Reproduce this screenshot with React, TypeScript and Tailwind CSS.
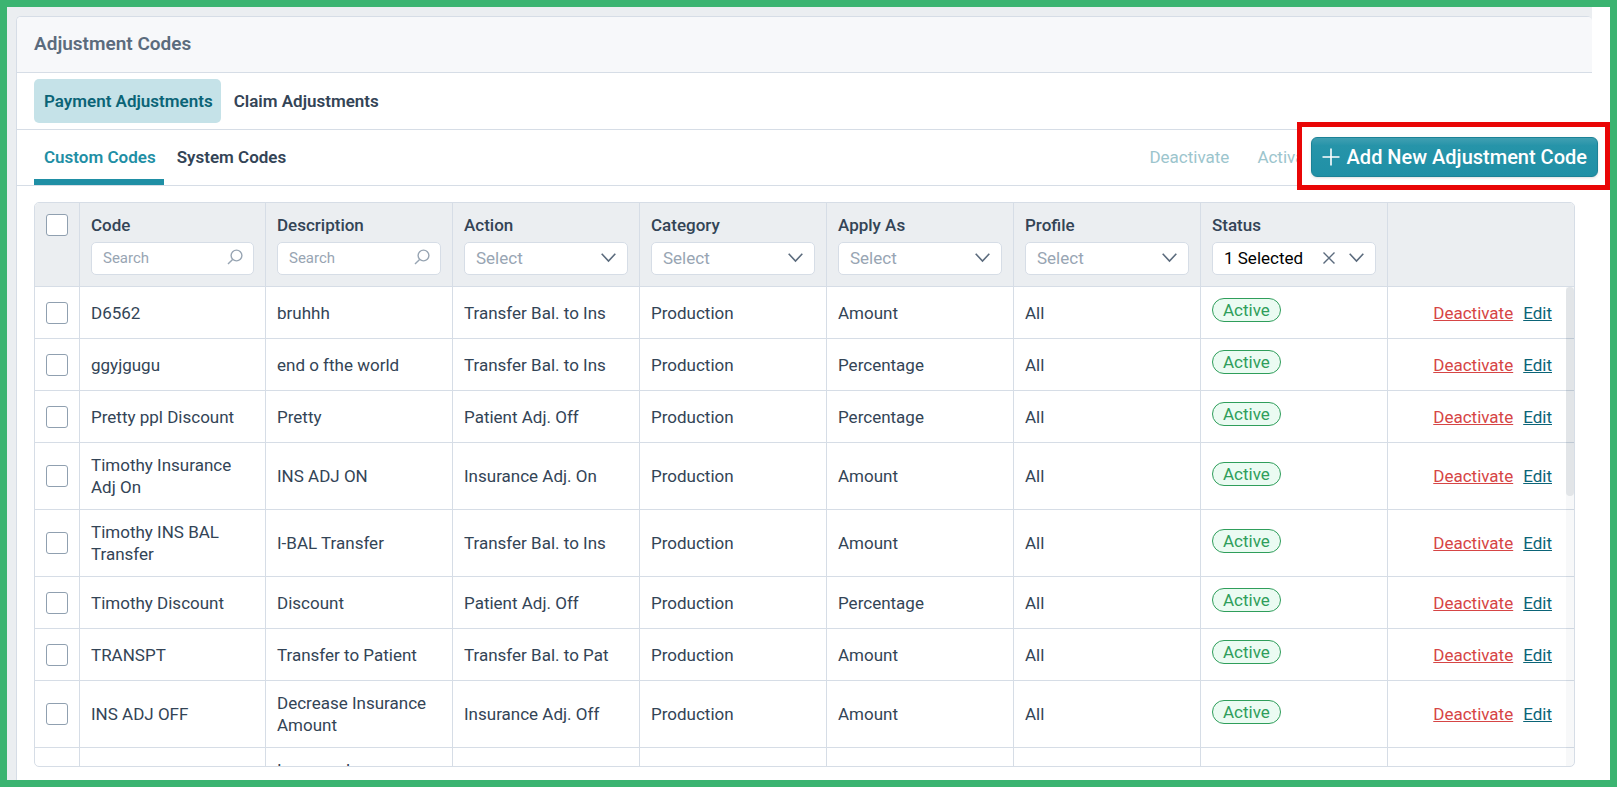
import { useState } from "react";

type Row = {
  code: string;
  description: string;
  action: string;
  category: string;
  applyAs: string;
  profile: string;
};

const rows: Row[] = [
  { code: "D6562", description: "bruhhh", action: "Transfer Bal. to Ins", category: "Production", applyAs: "Amount", profile: "All" },
  { code: "ggyjgugu", description: "end o fthe world", action: "Transfer Bal. to Ins", category: "Production", applyAs: "Percentage", profile: "All" },
  { code: "Pretty ppl Discount", description: "Pretty", action: "Patient Adj. Off", category: "Production", applyAs: "Percentage", profile: "All" },
  { code: "Timothy Insurance Adj On", description: "INS ADJ ON", action: "Insurance Adj. On", category: "Production", applyAs: "Amount", profile: "All" },
  { code: "Timothy INS BAL Transfer", description: "I-BAL Transfer", action: "Transfer Bal. to Ins", category: "Production", applyAs: "Amount", profile: "All" },
  { code: "Timothy Discount", description: "Discount", action: "Patient Adj. Off", category: "Production", applyAs: "Percentage", profile: "All" },
  { code: "TRANSPT", description: "Transfer to Patient", action: "Transfer Bal. to Pat", category: "Production", applyAs: "Amount", profile: "All" },
  { code: "INS ADJ OFF", description: "Decrease Insurance Amount", action: "Insurance Adj. Off", category: "Production", applyAs: "Amount", profile: "All" },
];

// The next row only peeks above the lower edge of the scroll area.
const nextRow = { code: "", description: "Increase Insurance Amount" };

const checkboxClass =
  "block size-[22px] appearance-none rounded-[3px] border border-[#90a0b0] bg-white checked:bg-[#1f8fa5]";
const headClass = "border-r border-b border-[#d6dde6] p-[11px] text-left align-top font-medium";
const cellClass = "border-r border-b border-[#d6dde6] px-[11px] py-[11px] align-middle";
const fieldClass =
  "h-[33px] w-full appearance-none rounded-[5px] border border-[#d6dde6] bg-white pb-[2px] pl-[11px] font-normal outline-none";

function SearchIcon() {
  return (
    <svg className="pointer-events-none absolute top-[7px] right-[11px]" width="16" height="16" viewBox="0 0 16 16" fill="none" stroke="#98a5b3" strokeWidth="1.4" aria-hidden="true">
      <circle cx="9.5" cy="6.5" r="5.4" />
      <path d="M5.6 10.4 L1 15" />
    </svg>
  );
}

function ChevronIcon() {
  return (
    <svg className="pointer-events-none absolute top-[11px] right-[12px]" width="15" height="10" viewBox="0 0 15 10" fill="none" stroke="#5b6b7d" strokeWidth="1.6" aria-hidden="true">
      <path d="M0.7 0.8 L7.5 8 L14.3 0.8" />
    </svg>
  );
}

function SearchHead({ label }: { label: string }) {
  return (
    <th scope="col" className={headClass}>
      <label className="block">
        {label}
        <span className="relative mt-[6px] block">
          <input type="text" placeholder="Search" className={`${fieldClass} pr-8 text-[15px] placeholder:text-[#98a5b3]`} />
          <SearchIcon />
        </span>
      </label>
    </th>
  );
}

function SelectHead({ label, options }: { label: string; options: string[] }) {
  return (
    <th scope="col" className={headClass}>
      <label className="block">
        {label}
        <span className="relative mt-[6px] block">
          <select className={`${fieldClass} text-[#98a5b3]`} defaultValue="">
            <option value="">Select</option>
            {options.map((o) => (
              <option key={o}>{o}</option>
            ))}
          </select>
          <ChevronIcon />
        </span>
      </label>
    </th>
  );
}

function StatusHead() {
  const [value, setValue] = useState("Active");
  return (
    <th scope="col" className={headClass}>
      <label htmlFor="status" className="block">Status</label>
      <span className="relative mt-[6px] block">
        <select id="status" className={`${fieldClass} text-black`} value={value} onChange={(e) => setValue(e.target.value)}>
          <option value="">Select</option>
          <option value="Active">1 Selected</option>
        </select>
        <button type="button" aria-label="Clear status" className="absolute top-[10px] right-[41px]" onClick={() => setValue("")}>
          <svg className="block" width="12" height="12" viewBox="0 0 12 12" stroke="#5b6b7d" strokeWidth="1.4" aria-hidden="true">
            <path d="M0.5 0.5 L11.5 11.5 M11.5 0.5 L0.5 11.5" />
          </svg>
        </button>
        <ChevronIcon />
      </span>
    </th>
  );
}

function CodeRow({ row }: { row: Row }) {
  return (
    <tr className="h-[52px]">
      <td className={cellClass}>
        <input type="checkbox" aria-label={`Select ${row.code}`} className={checkboxClass} />
      </td>
      <td className={cellClass}>{row.code}</td>
      <td className={cellClass}>{row.description}</td>
      <td className={cellClass}>{row.action}</td>
      <td className={cellClass}>{row.category}</td>
      <td className={cellClass}>{row.applyAs}</td>
      <td className={cellClass}>{row.profile}</td>
      <td className="border-r border-b border-[#d6dde6] px-[11px] pt-[10px] pb-[15px] align-middle">
        <span className="flex h-6 w-fit items-center rounded-full border border-[#2f9e5b] bg-[#ebfbf2] px-[10px] text-[#2f9e5b]">Active</span>
      </td>
      <td className="border-b border-[#d6dde6] pr-[22px] align-middle">
        <div className="flex justify-end gap-[10px]">
          <a href="#deactivate" className="text-[#d64545] underline">Deactivate</a>
          <a href="#edit" className="text-[#0b6477] underline">Edit</a>
        </div>
      </td>
    </tr>
  );
}

export default function App() {
  return (
    <div className="relative flex h-screen flex-col border-[7px] border-[#3bb471] bg-white font-['Roboto',sans-serif] text-[17px] leading-[22px] text-[#334456]">
      <div className="mr-[18px] flex min-h-0 flex-1 flex-col bg-[#ebeef1] pt-[9px] pl-[9px]">
        <main className="flex min-h-0 flex-1 flex-col rounded-t-[5px] border-t border-l border-[#d6dde6] bg-white">
          <header className="flex h-14 items-center rounded-t-[4px] border-b border-[#d6dde6] bg-[#f7f8fa] px-[17px] pb-[2px]">
            <h1 className="text-[19px] font-semibold text-[#5b6b7d]">Adjustment Codes</h1>
          </header>

          <nav className="flex h-[57px] items-center gap-[3px] border-b border-[#d6dde6] px-[17px] font-semibold">
            <button type="button" className="h-11 rounded-[5px] bg-[#c5e2e8] pr-[8px] pl-[10px] text-[#0b6477]">Payment Adjustments</button>
            <button type="button" className="h-11 pr-[8px] pl-[10px]">Claim Adjustments</button>
          </nav>

          <div className="flex h-14 shrink-0 border-b border-[#d6dde6] px-[17px]">
            <div className="flex gap-[3px] font-semibold">
              <button type="button" className="border-b-[6px] border-[#1f8fa5] pt-1 pr-[8px] pl-[10px] text-[#1f8fa5]">Custom Codes</button>
              <button type="button" className="pr-[8px] pb-[2px] pl-[10px]">System Codes</button>
            </div>
            <div className="ml-auto flex gap-[28px] pr-[256px] pb-[2px] text-[#9cc5cd]">
              <button type="button">Deactivate</button>
              <button type="button">Activate</button>
            </div>
          </div>

          <section className="relative mt-4 mr-[17px] mb-[13px] ml-[17px] min-h-0 flex-1 overflow-hidden rounded-[5px] border border-[#d6dde6]">
            <table className="w-full table-fixed border-separate border-spacing-0">
              <colgroup>
                <col className="w-[45px]" />
                <col className="w-[186px]" />
                <col className="w-[187px]" />
                <col className="w-[187px]" />
                <col className="w-[187px]" />
                <col className="w-[187px]" />
                <col className="w-[187px]" />
                <col className="w-[187px]" />
                <col />
              </colgroup>
              <thead className="bg-[#ebeef1]">
                <tr>
                  <th scope="col" className={headClass}>
                    <input type="checkbox" aria-label="Select all" className={checkboxClass} />
                  </th>
                  <SearchHead label="Code" />
                  <SearchHead label="Description" />
                  <SelectHead label="Action" options={["Transfer Bal. to Ins", "Transfer Bal. to Pat", "Patient Adj. Off", "Insurance Adj. On", "Insurance Adj. Off"]} />
                  <SelectHead label="Category" options={["Production"]} />
                  <SelectHead label="Apply As" options={["Amount", "Percentage"]} />
                  <SelectHead label="Profile" options={["All"]} />
                  <StatusHead />
                  <td className="border-b border-[#d6dde6]" />
                </tr>
              </thead>
              <tbody>
                {rows.map((row) => (
                  <CodeRow key={row.code} row={row} />
                ))}
                <tr>
                  <td className={cellClass} />
                  <td className={cellClass}>{nextRow.code}</td>
                  <td className={cellClass}>{nextRow.description}</td>
                  <td className={cellClass} />
                  <td className={cellClass} />
                  <td className={cellClass} />
                  <td className={cellClass} />
                  <td className={cellClass} />
                  <td />
                </tr>
              </tbody>
            </table>
            <div className="absolute top-[84px] right-0 bottom-0 w-2 bg-[#30465c]/4">
              <div className="h-[209px] rounded-full bg-[#30465c]/10" />
            </div>
          </section>
        </main>
      </div>

      <div className="absolute top-[115px] right-0 border-[5px] border-[#e90606] bg-white pt-[10px] pr-[7px] pb-[8px] pl-[9px]">
        <button type="button" className="flex h-10 items-center gap-[7px] rounded-[6px] border border-[#1c8297] bg-linear-to-b from-[#3f9fb2] via-[#2694a9] via-20% to-[#2090a6] px-[10px] text-[20px] font-medium text-white shadow-sm">
          <svg width="18" height="18" viewBox="0 0 18 18" stroke="currentColor" strokeWidth="1.6" aria-hidden="true">
            <path d="M9 0.5 V17.5 M0.5 9 H17.5" />
          </svg>
          Add New Adjustment Code
        </button>
      </div>
    </div>
  );
}
